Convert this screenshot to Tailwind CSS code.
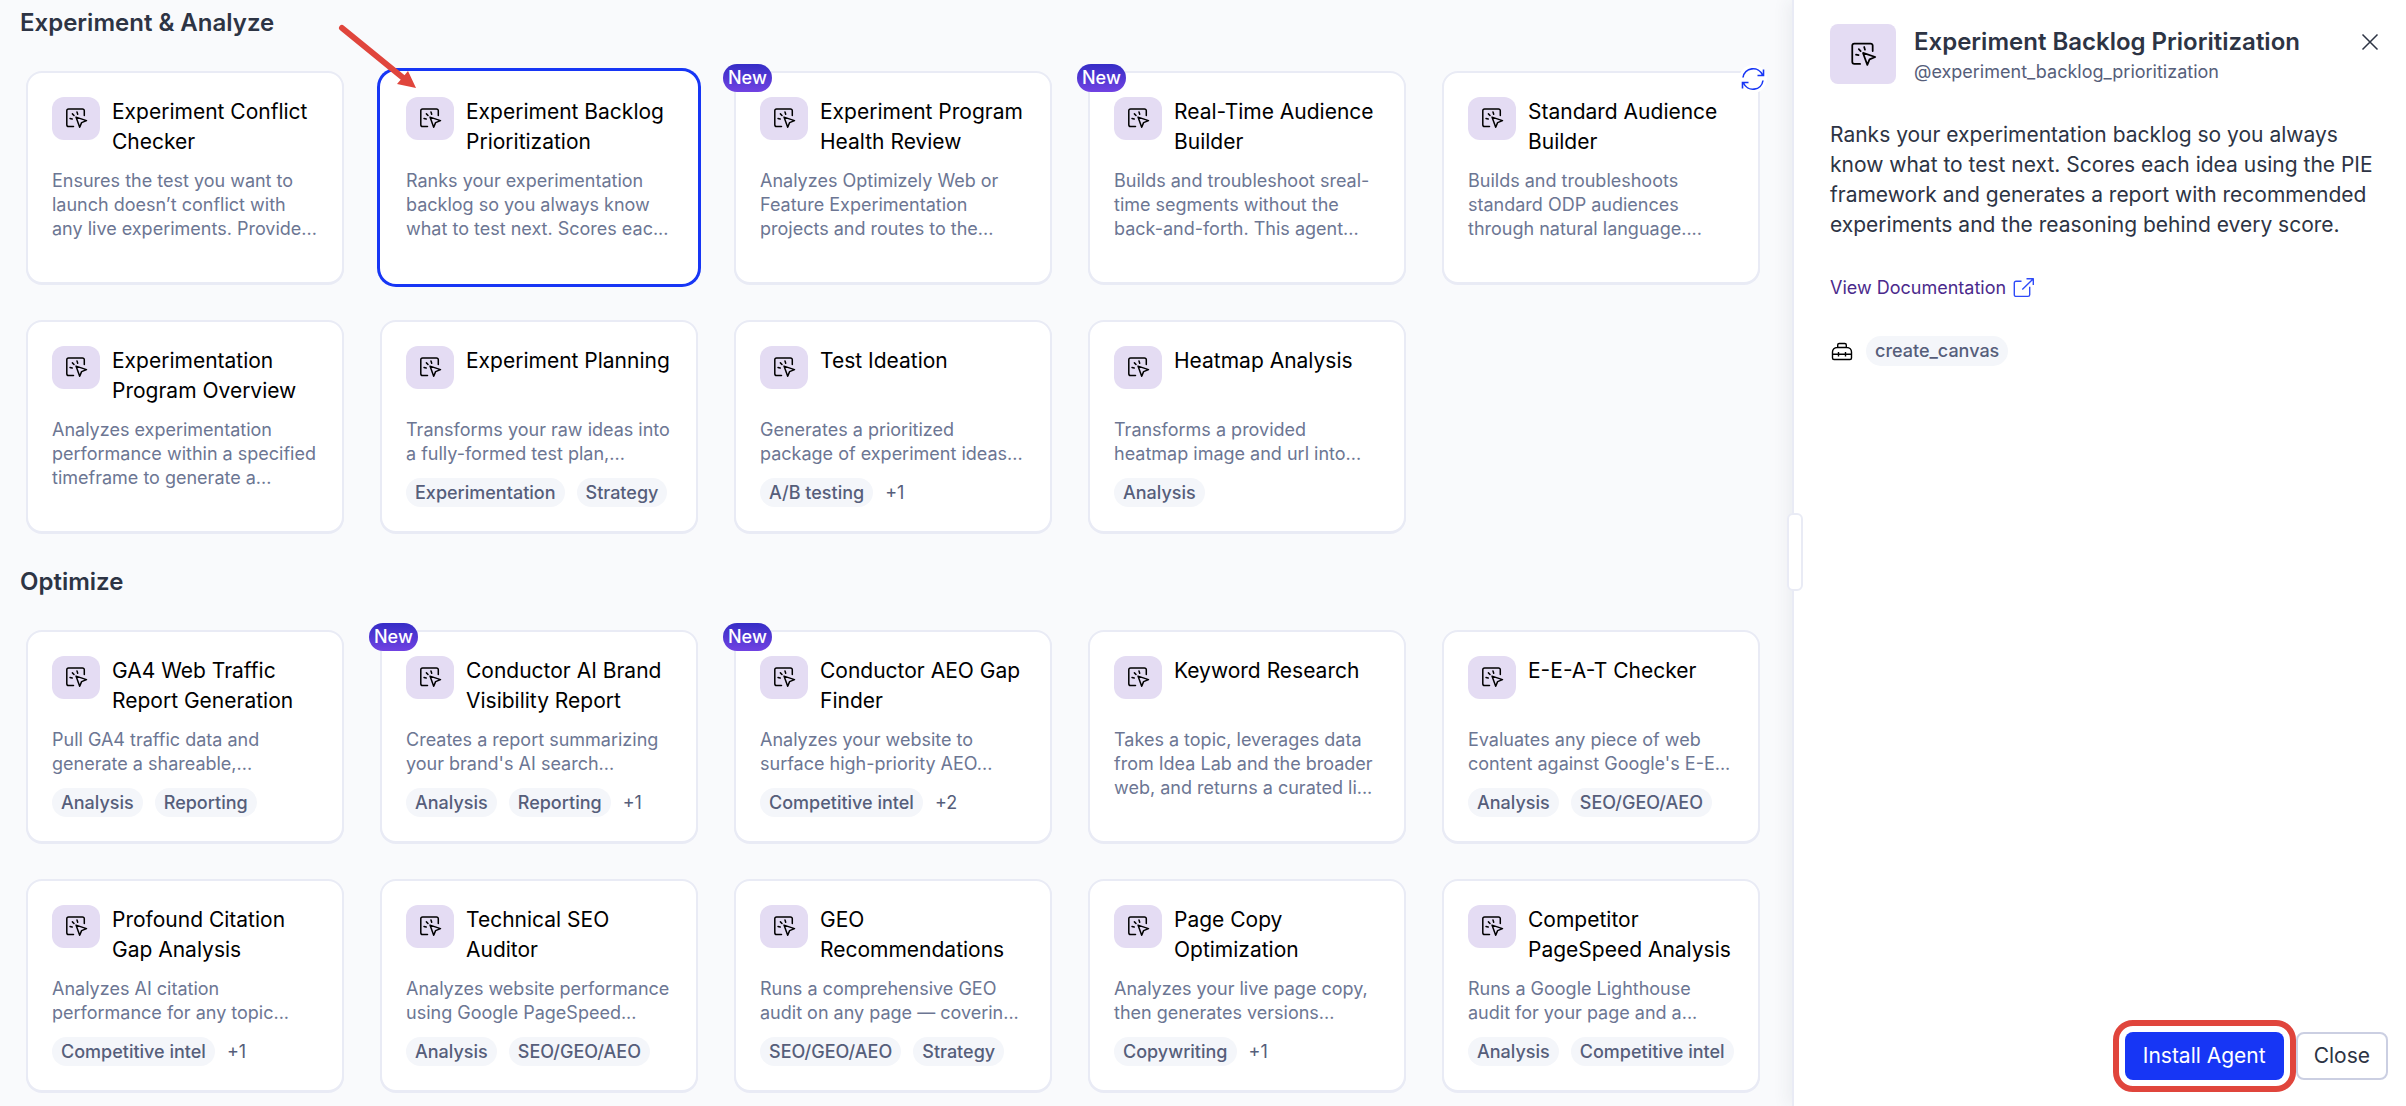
<!DOCTYPE html>
<html lang="en">
<head>
<meta charset="utf-8">
<meta name="viewport" content="width=device-width, initial-scale=1">
<title>Agent Directory</title>
<script src="https://cdn.jsdelivr.net/npm/@tailwindcss/browser@4"></script>
</head>
<body class="flex h-screen overflow-hidden bg-[#f9fafc] font-['Inter',sans-serif] text-[#2d3444]">

<svg class="hidden" aria-hidden="true">
  <symbol id="agent" viewBox="0 0 24 24" fill="none" stroke="currentColor" stroke-width="1.5" stroke-linecap="round" stroke-linejoin="round">
    <path d="M9.500 20.500H4.600a1.800 1.800 0 0 1-1.800-1.800V4.800A1.800 1.800 0 0 1 4.600 3h13.900a1.800 1.800 0 0 1 1.800 1.800V9.500"/>
    <path d="M12 11.100 22.500 14.600l-4.900 2L15.700 21.300z"/>
    <path d="M13 6l.7 2.300M8.400 7.900 10 9.500M6 12.500l2.200.5"/>
  </symbol>
</svg>

<main class="min-w-0 flex-1 overflow-hidden pl-5">
  <section>
    <h2 class="h-11 text-2xl leading-[46px] font-semibold">Experiment &amp; Analyze</h2>
    <div id="analyze" class="grid grid-cols-5 gap-9 pt-[27px] pr-8 pl-[6px]"></div>
  </section>
  <section class="pt-[26px]">
    <h2 class="h-11 text-2xl leading-[46px] font-semibold">Optimize</h2>
    <div id="optimize" class="grid grid-cols-5 gap-9 pt-[27px] pr-8 pl-[6px]"></div>
  </section>
</main>

<aside class="relative flex w-[614px] shrink-0 flex-col border-l-2 border-[#e9ebf5] bg-white shadow-[-4px_0_16px_rgba(40,50,90,0.07)]">
  <button aria-label="Resize panel" class="absolute top-[513px] -left-[7px] h-[78px] w-4 rounded-md border-2 border-[#e9ebf5] bg-white"></button>

  <header class="flex items-start pt-6 pr-6 pl-9">
    <div class="flex h-[60px] w-[66px] items-center justify-center rounded-lg bg-[#e4dcf3] text-black">
      <svg class="size-7"><use href="#agent"/></svg>
    </div>
    <div class="ml-[18px] flex-1">
      <h1 class="text-2xl leading-9 font-semibold">Experiment Backlog Prioritization</h1>
      <p class="text-lg leading-6 text-[#565e7a]">@experiment_backlog_prioritization</p>
    </div>
    <button aria-label="Close panel" class="mt-1.5 flex size-6 items-center justify-center">
      <svg class="size-6" viewBox="0 0 24 24" fill="none" stroke="currentColor" stroke-width="1.500"><path d="M4.500 4.500l15 15M19.500 4.500l-15 15"/></svg>
    </button>
  </header>

  <div class="flex-1 pt-9 pr-5 pl-9">
    <p class="text-[21px] leading-[30px]">Ranks your experimentation backlog so you always know what to test next. Scores each idea using the PIE framework and generates a report with recommended experiments and the reasoning behind every score.</p>
    <a href="#" class="mt-[33px] flex items-center gap-1.5 text-lg leading-[30px] text-[#4b2a8c]">View Documentation
      <svg class="size-6" viewBox="0 0 24 24" fill="none" stroke="#2f4bf8" stroke-width="1.400" stroke-linejoin="round"><path d="M9.500 5.300H4a1.700 1.700 0 0 0-1.700 1.700v11.700A1.700 1.700 0 0 0 4 20.400h12a1.700 1.700 0 0 0 1.700-1.700V10.700M14.500 2.700h6.800V9M21.300 2.700 10.300 13.500"/></svg>
    </a>
    <div class="mt-[33px] flex items-center gap-3">
      <svg class="size-6 text-black" viewBox="0 0 24 24" fill="none" stroke="currentColor" stroke-width="1.400" stroke-linejoin="round"><path d="M7.700 8.500V6A1.500 1.500 0 0 1 9.200 4.500h5.600A1.500 1.500 0 0 1 16.300 6v2.500M2.500 13A4.500 4.500 0 0 1 7 8.500h10a4.500 4.500 0 0 1 4.500 4.500v6a1.500 1.500 0 0 1-1.500 1.500H4A1.500 1.500 0 0 1 2.500 19zM2.500 15.300h19M8.500 13v4.500M15.500 13v4.500"/></svg>
      <span class="rounded-full bg-[#f4f6fa] px-[9px] text-lg leading-[30px] font-medium text-[#565e7a]">create_canvas</span>
    </div>
  </div>

  <footer class="flex justify-end gap-3 pr-[18px] pb-[26px]">
    <button class="h-12 rounded-lg bg-[#1736f5] px-[18px] text-[21px] text-white outline-6 outline-offset-6 outline-[#e0453c]">Install Agent</button>
    <button class="h-12 rounded-lg border-2 border-[#cbcfe2] px-4 text-[21px]">Close</button>
  </footer>
</aside>

<svg class="pointer-events-none absolute top-5 left-[330px] h-20 w-24" viewBox="330 20 96 80" fill="#e0453c" aria-hidden="true">
  <path d="M342 28 407 81" stroke="#e0453c" stroke-width="6" stroke-linecap="round"/>
  <path d="M416 88 397 84 403 77 408 71z"/>
</svg>

<script>
const analyze = [
  ["Experiment Conflict Checker", "Ensures the test you want to launch doesn’t conflict with any live experiments. Provide..."],
  ["Experiment Backlog Prioritization", "Ranks your experimentation backlog so you always know what to test next. Scores eac...", [], { selected: true }],
  ["Experiment Program Health Review", "Analyzes Optimizely Web or Feature Experimentation projects and routes to the...", [], { isNew: true }],
  ["Real-Time Audience Builder", "Builds and troubleshoot sreal-time segments without the back-and-forth. This agent...", [], { isNew: true }],
  ["Standard Audience Builder", "Builds and troubleshoots standard ODP audiences through natural language....", [], { update: true }],
  ["Experimentation Program Overview", "Analyzes experimentation performance within a specified timeframe to generate a..."],
  ["Experiment Planning", "Transforms your raw ideas into a fully-formed test plan,...", ["Experimentation", "Strategy"]],
  ["Test Ideation", "Generates a prioritized package of experiment ideas...", ["A/B testing", "+1"]],
  ["Heatmap Analysis", "Transforms a provided heatmap image and url into...", ["Analysis"]],
];
const optimize = [
  ["GA4 Web Traffic Report Generation", "Pull GA4 traffic data and generate a shareable,...", ["Analysis", "Reporting"]],
  ["Conductor AI Brand Visibility Report", "Creates a report summarizing your brand's AI search...", ["Analysis", "Reporting", "+1"], { isNew: true }],
  ["Conductor AEO Gap Finder", "Analyzes your website to surface high-priority AEO...", ["Competitive intel", "+2"], { isNew: true }],
  ["Keyword Research", "Takes a topic, leverages data from Idea Lab and the broader web, and returns a curated li..."],
  ["E-E-A-T Checker", "Evaluates any piece of web content against Google's E-E...", ["Analysis", "SEO/GEO/AEO"]],
  ["Profound Citation Gap Analysis", "Analyzes AI citation performance for any topic...", ["Competitive intel", "+1"]],
  ["Technical SEO Auditor", "Analyzes website performance using Google PageSpeed...", ["Analysis", "SEO/GEO/AEO"]],
  ["GEO Recommendations", "Runs a comprehensive GEO audit on any page — coverin...", ["SEO/GEO/AEO", "Strategy"]],
  ["Page Copy Optimization", "Analyzes your live page copy, then generates versions...", ["Copywriting", "+1"]],
  ["Competitor PageSpeed Analysis", "Runs a Google Lighthouse audit for your page and a...", ["Analysis", "Competitive intel"]],
];

const tag = t => t.startsWith("+")
  ? `<li class="text-lg leading-[29px] text-[#565e7a]">${t}</li>`
  : `<li class="rounded-full bg-[#f4f6fa] px-[9px] text-lg leading-[29px] font-medium text-[#565e7a]">${t}</li>`;

const card = ([title, text, tags = [], o = {}]) => `
  <article class="relative h-[213px] rounded-2xl border-2 bg-white px-6 pt-6 ${o.selected ? "border-white ring-3 ring-[#1736f5]" : "border-[#e9ebf5] shadow-[0_1px_0_#e9ebf5]"}">
    ${o.isNew ? `<span class="absolute -top-[9px] -left-[13px] rounded-full bg-linear-to-b from-[#352cc6] to-[#7142e2] px-[5px] text-lg leading-7 font-medium text-white">New</span>` : ""}
    ${o.update ? `<span class="absolute -top-2 -right-[9px] flex size-7 items-center justify-center rounded-full bg-white">
      <svg class="size-6" viewBox="0 0 24 24" fill="none" stroke="#1736f5" stroke-width="1.600"><path d="M2 10.500A10.200 10.200 0 0 1 21.500 8M22.500 2.500V8.500h-6M22 13.500A10.200 10.200 0 0 1 2.500 16M1.500 21.500V15.500h6"/></svg></span>` : ""}
    <div class="flex h-[72px] gap-3">
      <div class="flex h-[43px] w-12 shrink-0 items-center justify-center rounded-xl bg-[#e4dcf3] text-black"><svg class="mb-0.5 size-6"><use href="#agent"/></svg></div>
      <h3 class="text-[21px] leading-[30px] text-black">${title}</h3>
    </div>
    <p class="text-lg leading-6 text-[#6c7693]">${text}</p>
    ${tags.length ? `<ul class="flex gap-3 pt-3 whitespace-nowrap">${tags.map(tag).join("")}</ul>` : ""}
  </article>`;

document.getElementById("analyze").innerHTML = analyze.map(card).join("");
document.getElementById("optimize").innerHTML = optimize.map(card).join("");
</script>
</body>
</html>
